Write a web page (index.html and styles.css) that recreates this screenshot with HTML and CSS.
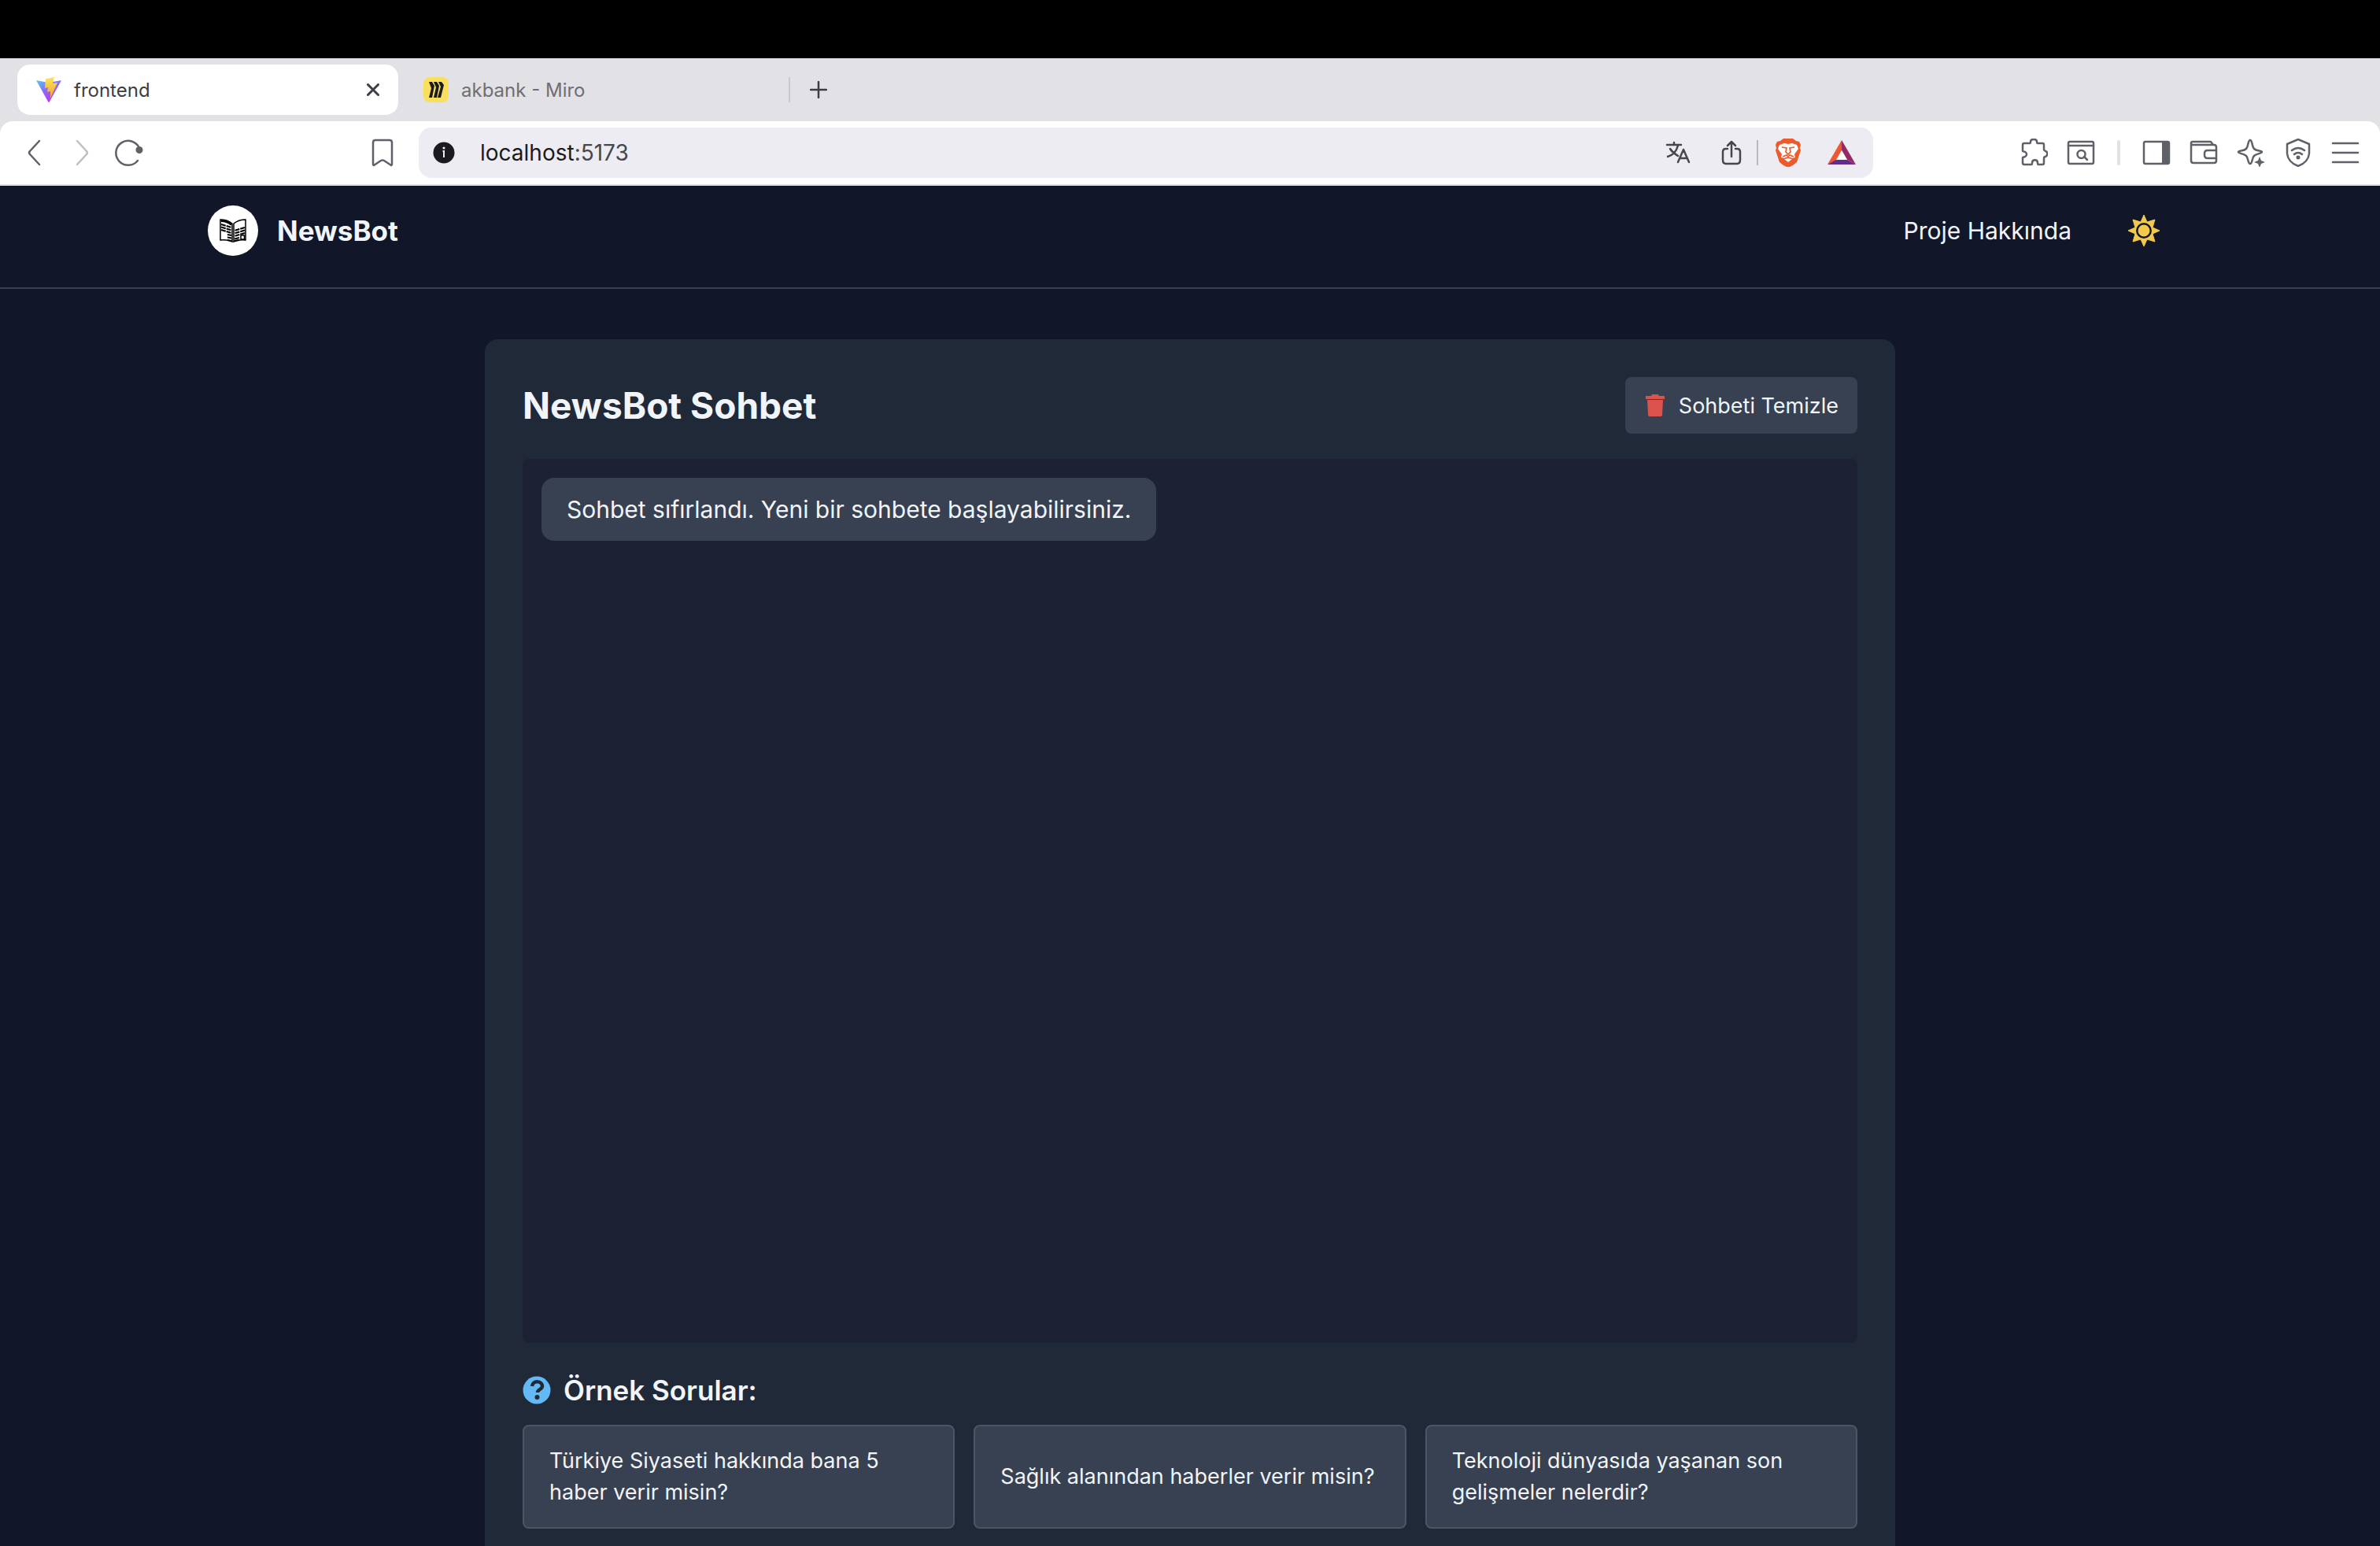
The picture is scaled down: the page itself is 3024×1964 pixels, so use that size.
FILE: index.html
```
<!DOCTYPE html>
<html lang="tr">
<head>
<meta charset="utf-8">
<title>frontend</title>
<link rel="stylesheet" href="styles.css">
</head>
<body>
<div class="screen-top"></div>
<div class="tab-strip">
  <div class="tab tab-active">
    <svg class="icon-32" viewBox="0 0 32 32" aria-hidden="true">
      <defs>
        <linearGradient id="vite-a" x1="0" y1="0" x2=".6" y2="1"><stop offset="0" stop-color="#58c8fb"/><stop offset=".5" stop-color="#8a6af5"/><stop offset="1" stop-color="#bd34fe"/></linearGradient>
        <linearGradient id="vite-b" x1="0" y1="0" x2="0" y2="1"><stop offset="0" stop-color="#ffe65c"/><stop offset="1" stop-color="#f0a02e"/></linearGradient>
      </defs>
      <path d="M0 4l16 3 16-3-15 27q-1 2-2 0z" fill="url(#vite-a)"/>
      <path d="M12 2l11-2-2 8 6-1-9 20 0-9-4 1 1-6-4 1z" fill="url(#vite-b)"/>
    </svg>
    <span class="tab-title">frontend</span>
    <button class="icon-button" aria-label="Close tab"><svg class="icon-16" viewBox="0 0 16 16"><path d="M1.500 1.500l13 13M14.500 1.500l-13 13" stroke="#3b3e44" stroke-width="3" stroke-linecap="round"/></svg></button>
  </div>
  <div class="tab">
    <svg class="icon-32" viewBox="0 0 32 32" aria-hidden="true">
      <rect width="32" height="32" rx="8" fill="#fadf5c"/>
      <path d="M7 6h4l3 5-3 15H7l3-12zM13 6h4l3 5-3 15h-4l3-13zM19 6h4l3 4-4 16h-4l4-14z" fill="#1c1c1e"/>
    </svg>
    <span class="tab-title">akbank - Miro</span>
  </div>
  <span class="strip-divider"></span>
  <button class="icon-button new-tab" aria-label="New tab"><svg class="icon-22" viewBox="0 0 22 22"><path d="M11 1v20M1 11h20" stroke="#3b3e44" stroke-width="2.500" stroke-linecap="round"/></svg></button>
</div>
<div class="toolbar-back">
<div class="toolbar">
  <div class="nav-buttons">
    <button class="icon-button" aria-label="Back"><svg class="icon-36" viewBox="0 0 36 36"><path d="M24 3L12 16q-2 2 0 4l12 13" class="stroke"/></svg></button>
    <button class="icon-button faded" aria-label="Forward"><svg class="icon-36" viewBox="0 0 36 36"><path d="M12 3l12 13q2 2 0 4L12 33" class="stroke"/></svg></button>
    <button class="icon-button" aria-label="Reload"><svg class="icon-36" viewBox="0 0 36 36"><path d="M29 28A15.500 15.500 0 1 1 31 12" class="stroke"/><circle cx="31" cy="14.500" r="4.500" fill="#5f6168"/></svg></button>
    <button class="icon-button bookmark" aria-label="Bookmark"><svg class="icon-36" viewBox="0 0 36 36"><path d="M9 2h18q3 0 3 3v28l-1 1-9-6q-2-1-4 0l-9 6-1-1V5q0-3 3-3z" class="stroke"/></svg></button>
  </div>
  <div class="address-bar">
    <svg class="icon-28" viewBox="0 0 28 28" aria-hidden="true"><circle cx="14" cy="14" r="13.500" fill="#1b1a20"/><circle cx="14" cy="8" r="1.600" fill="#edecf2"/><path d="M12.500 12H14v8" fill="none" stroke="#edecf2" stroke-width="2"/></svg>
    <a class="url" href="#"><span class="host">localhost</span>:5173</a>
    <button class="icon-button" aria-label="Translate"><svg class="icon-32" viewBox="0 0 32 32"><path d="M2 6h18M11 3v3M6 11c3 5 7 7 10 9M16 7c-2 7-6 12-13 14M16 28l7-16 7 16M19 23h8" class="stroke dark"/></svg></button>
    <button class="icon-button share" aria-label="Share"><svg class="icon-32" viewBox="0 0 32 32"><path d="M11 11H9q-4 0-4 4v10q0 5 4 5h14q4 0 4-5V15q0-4-4-4h-2M16 21V2M11 7l5-5 5 5" class="stroke dark"/></svg></button>
    <span class="bar-divider"></span>
    <button class="icon-button" aria-label="Brave Shields"><svg class="icon-36" viewBox="0 0 36 36"><path d="M8 3l4-3h12l4 3 4 1 2 4-1 4 1 3-5 15-5 4-6 3-6-3-5-4-5-15 1-3-1-4 2-4z" fill="#ec5b2a"/><path d="M7 8l6-2 5 1 5-1 6 2 2 5-5 7 1 4-4 1-5 3-5-3-4-1 1-4-5-7zM13 26l5-3 5 3-5 4z" fill="#fff"/><path d="M10 11l6 1-1 5 3 3 3-3-1-5 6-1M11 23l5-2 2 2 2-2 5 2M12 26l6-2 6 2" fill="none" stroke="#ec5b2a" stroke-width="1.700"/></svg></button>
    <button class="icon-button" aria-label="Brave Rewards"><svg class="icon-36" viewBox="0 0 36 36"><path d="M18 2v14l-7 12L0 33z" fill="#f0562f"/><path d="M18 2l18 31-11-6-7-12z" fill="#952b60"/><path d="M0 33l11-6h14l11 6z" fill="#622c8c"/><path d="M18 15l7 12H11z" fill="#fff"/></svg></button>
  </div>
  <div class="extension-buttons">
    <button class="icon-button" aria-label="Extensions"><svg class="icon-36" viewBox="0 0 36 36"><path d="M6 6h7q1 0 1-2c0-4 8-4 8 0q0 2 1 2h6q2 0 2 2v6q0 1 2 2c3 1 3 6 0 7q-2 0-2 2v6q0 2-2 2h-5q-1 0-1-2c0-5-7-5-7 0q0 2-1 2H6q-2 0-2-2v-7q5-1 5-4t-5-4V8q0-2 2-2z" class="stroke"/></svg></button>
    <button class="icon-button" aria-label="Search page"><svg class="icon-36" viewBox="0 0 36 36"><rect x="2" y="4" width="32" height="28" rx="2" class="stroke"/><path d="M2 9h32M22 23l4 4" class="stroke"/><circle cx="18.500" cy="20" r="5" class="stroke"/></svg></button>
    <span class="tool-divider"></span>
    <button class="icon-button" aria-label="Sidebar"><svg class="icon-36" viewBox="0 0 36 36"><rect x="2" y="4" width="32" height="28" rx="2" class="stroke"/><path d="M25 4h9v28h-9z" fill="#5f6168"/></svg></button>
    <button class="icon-button" aria-label="Wallet"><svg class="icon-36" viewBox="0 0 36 36"><path d="M2 8V6q0-2 2-2h23l3 4M2 8h29q3 0 3 3v17q0 3-3 3H5q-3 0-3-3zM34 15H23q-4 0-4 4v2q0 4 4 4h11" class="stroke"/></svg></button>
    <button class="icon-button" aria-label="Assistant"><svg class="icon-36" viewBox="0 0 36 36"><path d="M17 2c3 0 2 8 5 11s10 2 10 4-7 2-10 5-2 10-5 10-2-7-5-10-10-3-10-5 7-1 10-4 2-11 5-11z" class="stroke"/><path d="M29 23l2 5 5 2-5 2-2 5-2-5-5-2 5-2z" fill="#5f6168"/></svg></button>
    <button class="icon-button" aria-label="VPN"><svg class="icon-36" viewBox="0 0 36 36"><path d="M18 1l14 6v12q-1 11-14 16Q5 30 4 19V7zM10 15q8-6 16 0M13 20q5-4 10 0" class="stroke"/><circle cx="18" cy="24" r="2.500" fill="#5f6168"/></svg></button>
    <button class="icon-button" aria-label="Menu"><svg class="icon-36" viewBox="0 0 36 36"><path d="M2 6h32M2 18h32M2 30h32" class="stroke"/></svg></button>
  </div>
</div>
</div>
<div class="page">
  <header class="site-header">
    <div class="header-inner">
      <a class="brand" href="#">
        <svg class="brand-logo" viewBox="0 0 64 64" aria-hidden="true">
          <circle cx="32" cy="32" r="32" fill="#fff"/>
          <path d="M16 18q9 0 15 5v23q-6-3-15-2zM48 18q-9 0-15 5v23q6-3 15-2z" fill="#fff" stroke="#000" stroke-width="1.500"/>
          <path d="M17 19.500q8 0 13 5" stroke="#000" stroke-width="3" fill="none"/>
          <path d="M17 24l13 4M17 27.500l13 4M17 31l13 4M25 37l5 1M25 40.500l5 1M25 44l5 1M47 28l-13 4M47 31.500l-13 4M47 35l-13 4M40 41l-6 1.500M40 44l-6 1" stroke="#000" stroke-width="2.200" stroke-dasharray="6 1" fill="none"/>
          <path d="M42 38h4.500v5H42z" fill="#fff" stroke="#000" stroke-width="1.500"/>
        </svg>
        <span>NewsBot</span>
      </a>
      <nav class="site-nav">
        <a href="#">Proje Hakkında</a>
        <button class="icon-button" aria-label="Tema">
          <svg class="icon-40" viewBox="0 0 40 40"><path d="M20 0l4 9 10-3-3 10 9 4-9 4 3 10-10-3-4 9-4-9-10 3 3-10-9-4 9-4L6 6l10 3z" fill="#f3c94b" stroke="#f3c94b" stroke-linejoin="round"/><circle cx="20" cy="20" r="8.700" fill="#f3c94b" stroke="#111728" stroke-width="2.500"/></svg>
        </button>
      </nav>
    </div>
  </header>
  <main class="chat-card">
    <div class="card-head">
      <h1>NewsBot Sohbet</h1>
      <button class="clear-button">
        <svg class="icon-28" viewBox="0 0 28 28" aria-hidden="true"><path d="M2 2h7l1-2h8l1 2h7v4H2zM4 7h20l-1 19q0 2-2 2H7q-2 0-2-2z" fill="#dc524c"/></svg>
        Sohbeti Temizle
      </button>
    </div>
    <section class="chat-log"><p class="bubble">Sohbet sıfırlandı. Yeni bir sohbete başlayabilirsiniz.</p></section>
    <h2 class="samples-title">
      <svg class="icon-36" viewBox="0 0 36 36" aria-hidden="true"><circle cx="18" cy="18" r="17.500" fill="#62b9f3"/><path d="M12 13c1-8 13-7 13 0 0 4-6 4-6 8" fill="none" stroke="#202938" stroke-width="4.500"/><circle cx="18.500" cy="27" r="3" fill="#202938"/></svg>
      Örnek Sorular:
    </h2>
    <div class="samples">
      <button class="sample">Türkiye Siyaseti hakkında bana 5 haber verir misin?</button>
      <button class="sample">Sağlık alanından haberler verir misin?</button>
      <button class="sample">Teknoloji dünyasıda yaşanan son gelişmeler nelerdir?</button>
    </div>
  </main>
</div>
</body>
</html>
```
FILE: styles.css
```
* { box-sizing: border-box; }
body {
  margin: 0;
  height: 100vh;
  display: flex;
  flex-direction: column;
  overflow: hidden;
  background: #111728;
  font-family: Inter, "Liberation Sans", sans-serif;
}
h1, h2, p { margin: 0; }
a { color: inherit; text-decoration: none; }
button { font: inherit; color: inherit; border: 0; padding: 0; cursor: pointer; text-align: left; }
svg { display: block; flex: none; }
.icon-button { background: none; flex: none; }
.icon-16 { width: 16px; height: 16px; }
.icon-22 { width: 22px; height: 22px; }
.icon-28 { width: 28px; height: 28px; }
.icon-32 { width: 32px; height: 32px; }
.icon-36 { width: 36px; height: 36px; }
.icon-40 { width: 40px; height: 40px; }
.stroke { fill: none; stroke: #5f6168; stroke-width: 2.5; stroke-linecap: round; stroke-linejoin: round; }
.dark { stroke: #46474d; }
.faded { opacity: .4; }

.screen-top { flex: none; height: 74px; background: #000; }
.tab-strip { flex: none; height: 80px; display: flex; align-items: center; padding-left: 22px; background: #e2e1e6; }
.tab {
  width: 484px;
  height: 64px;
  display: flex;
  align-items: center;
  gap: 16px;
  padding: 0 24px;
  border-radius: 16px;
  font-size: 24px;
  color: #6e6e74;
}
.tab-active { background: #fff; color: #3b3e44; margin-right: 8px; }
.tab-title { flex: 1; }
.strip-divider { width: 2px; height: 32px; margin-left: 4px; background: #c9c8cd; }
.new-tab { margin-left: 25px; }

.toolbar-back { flex: none; background: #e2e1e6; }
.toolbar {
  height: 82px;
  display: flex;
  align-items: center;
  background: #fff;
  border-bottom: 2px solid #e2e1e6;
  border-radius: 16px 16px 0 0;
}
.nav-buttons { width: 532px; flex: none; display: flex; gap: 24px; padding: 0 28px 0 26px; }
.bookmark { margin-left: auto; }
.address-bar {
  flex: 1;
  height: 64px;
  display: flex;
  align-items: center;
  gap: 32px;
  padding: 0 22px 0 18px;
  border-radius: 16px;
  background: #edecf2;
}
.url { flex: 1; font-size: 28px; color: #46474d; }
.host { color: #1b1a20; }
.share { margin-left: 4px; }
.bar-divider { width: 2px; height: 32px; background: #b9b8be; margin: 0 -12px 0 -16px; }
.extension-buttons {
  width: 644px;
  flex: none;
  display: flex;
  align-items: center;
  justify-content: flex-end;
  gap: 24px;
  padding-right: 26px;
}
.tool-divider { width: 4px; height: 32px; border-radius: 2px; background: #e2e1e6; margin: 0 4px; }

.page { flex: 1; min-height: 0; overflow: hidden; color: #f1f4f9; }
.site-header { border-bottom: 2px solid #374151; }
.header-inner {
  max-width: 2560px;
  margin: 0 auto;
  padding: 25px 32px 40px;
  display: flex;
  align-items: center;
  justify-content: space-between;
}
.brand { display: flex; align-items: center; gap: 24px; font-size: 35px; font-weight: 700; line-height: 56px; }
.brand-logo { width: 64px; height: 64px; }
.site-nav { display: flex; align-items: center; gap: 72px; padding-right: 16px; font-size: 30px; line-height: 48px; }

.chat-card {
  max-width: 1792px;
  margin: 64px auto 0;
  padding: 48px;
  border-radius: 16px;
  background: #202938;
}
.card-head { display: flex; align-items: center; justify-content: space-between; margin-bottom: 32px; }
.card-head h1 { font-size: 46px; font-weight: 700; line-height: 72px; }
.clear-button {
  height: 72px;
  display: flex;
  align-items: center;
  gap: 16px;
  padding: 0 24px;
  border-radius: 8px;
  background: #374151;
  font-size: 27px;
}
.chat-log { height: calc((100vh - 236px) * .65); padding: 24px; border-radius: 8px; background: #1c2133; }
.bubble {
  width: fit-content;
  padding: 16px 32px;
  border-radius: 16px;
  background: #374151;
  font-size: 30px;
  line-height: 48px;
}
.samples-title {
  display: flex;
  align-items: center;
  gap: 16px;
  margin: 32px 0 16px;
  font-size: 35px;
  font-weight: 600;
  line-height: 56px;
}
.samples { display: grid; grid-template-columns: repeat(3, 1fr); gap: 24px; }
.sample {
  padding: 24px 32px;
  border: 2px solid #4b5563;
  border-radius: 8px;
  background: #374151;
  font-size: 27px;
  line-height: 40px;
}
```
